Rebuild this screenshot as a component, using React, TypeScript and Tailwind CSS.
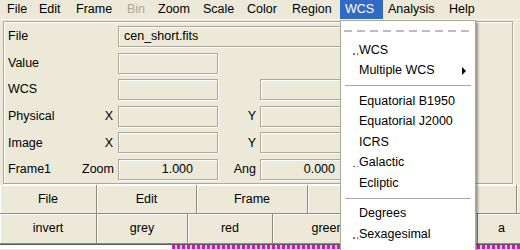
import React from "react";

const menus: [string, number, boolean?][] = [
  ["File", 32],
  ["Edit", 37],
  ["Frame", 51],
  ["Bin", 31, true],
  ["Zoom", 45],
  ["Scale", 44],
  ["Color", 45],
  ["Region", 53],
  ["WCS", 43],
  ["Analysis", 61],
  ["Help", 60],
];

const row1: [string, number][] = [
  ["File", 97],
  ["Edit", 100],
  ["Frame", 111],
  ["", 104],
  ["", 105],
  ["", 40],
];

const row2: [string, number][] = [
  ["invert", 97],
  ["grey", 91],
  ["red", 85],
  ["green", 110],
  ["", 95],
  ["a", 48],
];

function Box({ w, text, right }: { w: number; text?: string; right?: boolean }) {
  return (
    <div
      className={
        "h-[21px] border border-[#aca899] shadow-[inset_1px_1px_0_#fff,1px_1px_0_#fff] flex items-center whitespace-nowrap overflow-hidden " +
        (right ? "justify-end pr-[24px]" : "pl-[5px]")
      }
      style={{ width: w }}
    >
      {text}
    </div>
  );
}

function Btn({ label, w }: { label: string; w: number }) {
  return (
    <div
      className="h-full shrink-0 flex items-center justify-center border-r border-b border-[#8f8c7d] shadow-[inset_1px_1px_0_#fff] overflow-hidden whitespace-nowrap"
      style={{ width: w }}
    >
      {label}
    </div>
  );
}

function Item({ label, dot, arrow }: { label: string; dot?: boolean; arrow?: boolean }) {
  return (
    <div className="h-[20.5px] flex items-center pl-[18px] pr-[9px] relative">
      {dot && (
        <span className="absolute left-[12px] top-[13px] flex gap-[2px]">
          <span className="w-[1.5px] h-[1.5px] bg-[#e05050]" />
          <span className="w-[1.5px] h-[1.5px] bg-[#e05050]" />
        </span>
      )}
      <span className="flex-1">{label}</span>
      {arrow && (
        <span className="w-0 h-0 border-y-[4px] border-y-transparent border-l-[4px] border-l-black" />
      )}
    </div>
  );
}

function Sep() {
  return (
    <div className="h-[10px] pt-[4px] px-[4px]">
      <div className="h-[2px] border-t border-[#aca899] border-b border-b-white" />
    </div>
  );
}

export default function App() {
  return (
    <div className="w-[520px] h-[250px] overflow-hidden relative bg-[#ece9d8] text-black text-[12.5px] font-['Liberation_Sans',Arial,sans-serif]">
      {/* menu bar */}
      <div className="h-[20px] flex pl-[2px] border-b border-b-[#f7f5ee]">
        {menus.map(([m, w, dis]) => (
          <div
            key={m}
            className={
              "h-full shrink-0 flex items-center pl-[5px] " +
              (m === "WCS" ? "bg-[#316ac5] text-white" : dis ? "text-[#aca899]" : "")
            }
            style={{ width: w }}
          >
            {m}
          </div>
        ))}
      </div>

      {/* info panel */}
      <div className="mt-[1px] ml-[3px] w-[510px] h-[163px] border border-[#aca899] shadow-[inset_1px_1px_0_#fff,1px_1px_0_#fff] pt-[4px] pl-[4px] flex flex-col gap-[5.6px]">
        {[
          ["File", "", "file"],
          ["Value", "", "value"],
          ["WCS", "", "wcs"],
          ["Physical", "X", "Y"],
          ["Image", "X", "Y"],
          ["Frame1", "Zoom", "Ang"],
        ].map(([a, b, c]) => (
          <div key={a} className="h-[21px] flex items-center">
            <div className="w-[74px]">{a}</div>
            <div className="w-[31px] text-right whitespace-nowrap">{b}</div>
            <div className="w-[5px]" />
            {c === "file" ? (
              <Box w={300} text="cen_short.fits" />
            ) : (
              <>
                <Box w={100} text={c === "Ang" ? "1.000" : undefined} right />
                <div className="w-[38px] text-right">{c === "Y" || c === "Ang" ? c : ""}</div>
                <div className="w-[4px]" />
                {c !== "value" && <Box w={100} text={c === "Ang" ? "0.000" : undefined} right />}
              </>
            )}
          </div>
        ))}
      </div>

      {/* button bars */}
      <div className="mt-[1px] h-[29px] flex">
        {row1.map(([l, w], i) => (
          <Btn key={i} label={l} w={w} />
        ))}
      </div>
      <div className="h-[30px] flex">
        {row2.map(([l, w], i) => (
          <Btn key={i} label={l} w={w} />
        ))}
      </div>
      <div className="h-[5px] flex border-t border-[#5a5a5a]">
        <div className="w-[172px] bg-white" />
        <div className="flex-1 bg-[repeating-linear-gradient(90deg,#d01ab8_0px,#d01ab8_3px,#f2b8ea_3px,#f2b8ea_5px)]" />
      </div>

      {/* WCS dropdown */}
      <div className="absolute left-[340px] top-[20px] w-[136px] h-[240px] bg-white border border-[#aca899] shadow-[2px_2px_2px_rgba(0,0,0,0.35)]">
        <div className="h-[19px] flex items-center px-[3px]">
          <svg width="126" height="2">
            <line x1="0" y1="1" x2="126" y2="1" stroke="#a8a8a8" strokeWidth="1.5" strokeDasharray="8 5" />
          </svg>
        </div>
        <Item label="WCS" dot />
        <Item label="Multiple WCS" arrow />
        <Sep />
        <Item label="Equatorial B1950" />
        <Item label="Equatorial J2000" />
        <Item label="ICRS" />
        <Item label="Galactic" dot />
        <Item label="Ecliptic" />
        <Sep />
        <Item label="Degrees" />
        <Item label="Sexagesimal" dot />
      </div>
    </div>
  );
}
